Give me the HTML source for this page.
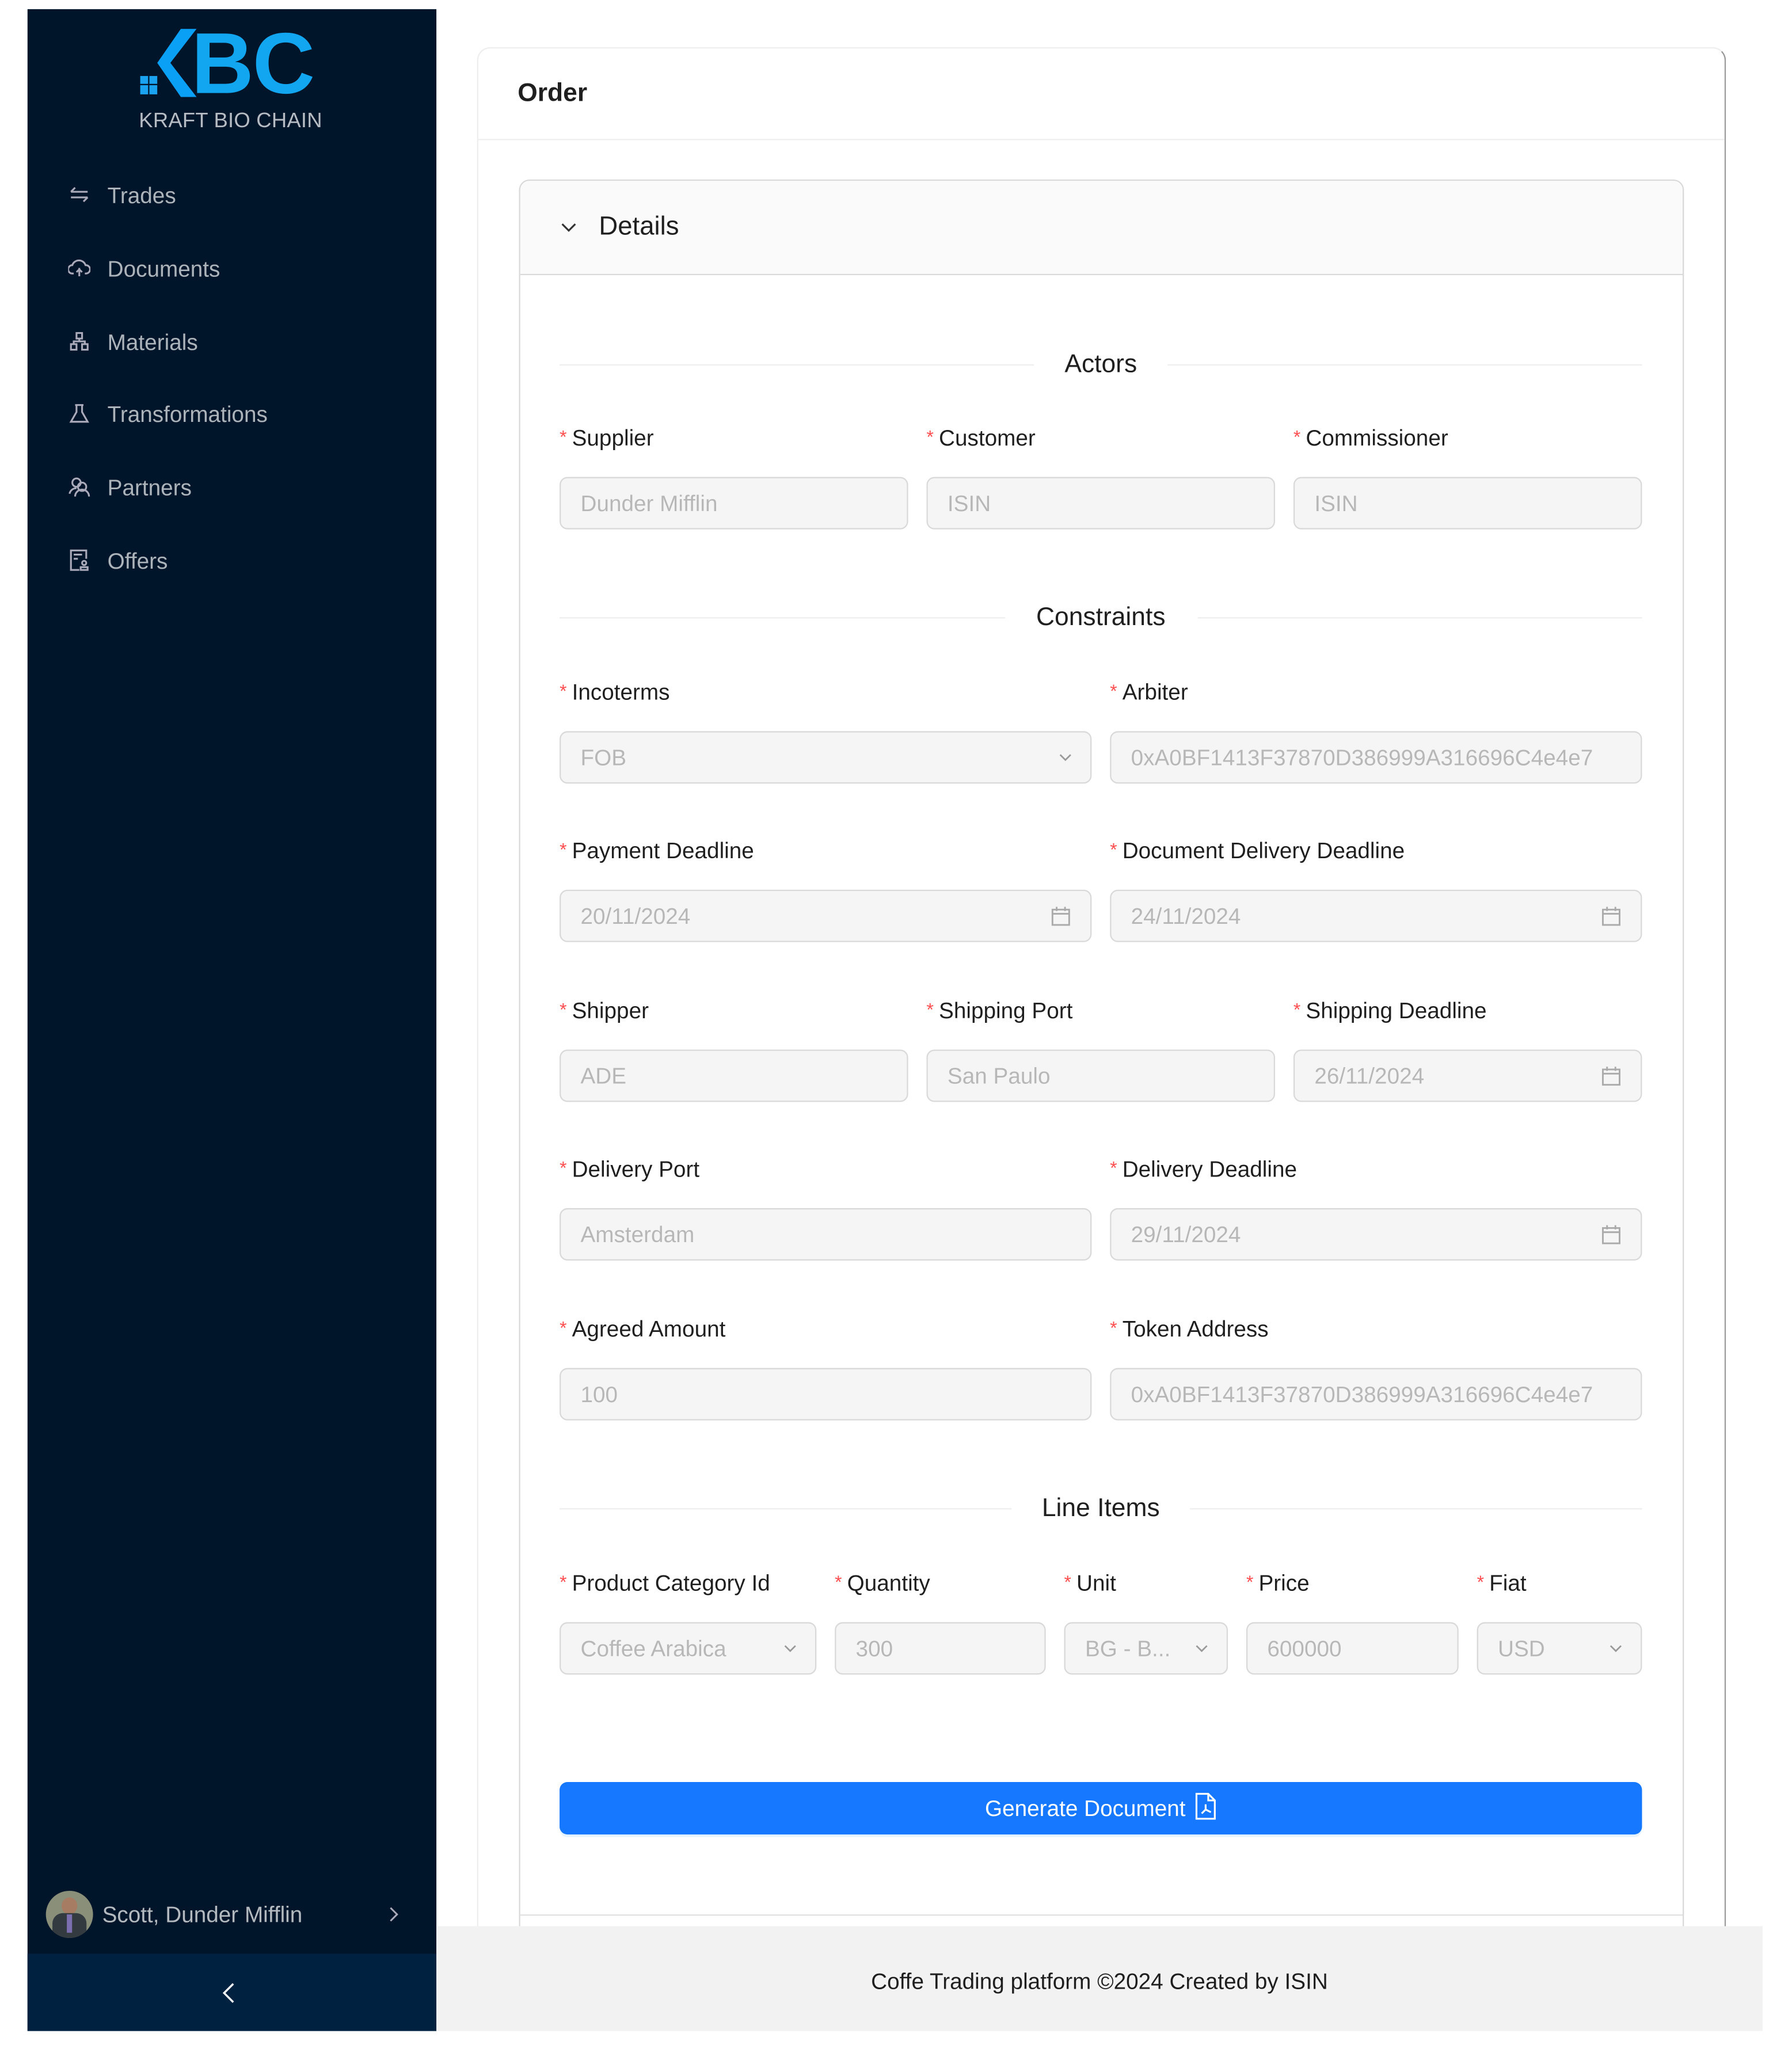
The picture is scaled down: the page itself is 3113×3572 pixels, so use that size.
<!DOCTYPE html>
<html><head><meta charset="utf-8"><style>
*{box-sizing:border-box;margin:0;padding:0}
html,body{width:3113px;height:3571px;overflow:hidden;background:#fff}
#root{position:absolute;left:0;top:0;width:1368px;height:1569px;transform:scale(2.2765);transform-origin:0 0;font-family:"Liberation Sans",sans-serif;color:rgba(0,0,0,.88)}
.a{position:absolute}
.side{left:21px;top:7px;width:312px;height:1543px;background:#001529}
.trig{left:21px;top:1491px;width:312px;height:59px;background:#002140}
.mi{position:absolute;left:82px;font-size:17px;color:rgba(255,255,255,.68)}
.ic{position:absolute;left:52px;width:17px;height:17px}
.card{left:364px;top:36px;width:953px;height:1500px;border:1px solid #eee;border-right:1px solid #999;border-radius:10px;background:#fff}
.lbl{position:absolute;font-size:17px;color:rgba(0,0,0,.88)}
.lbl:before{content:"*";color:#ff4d4f;font-size:14px;margin-right:4px;position:relative;top:-2px}
.in{position:absolute;height:40px;background:#f5f5f5;border:1px solid #d9d9d9;border-radius:6px;font-size:17px;color:rgba(0,0,0,.25);padding-left:15px;line-height:39px;white-space:nowrap;overflow:hidden}
.chev{position:absolute;right:14px;top:14px;width:10px;height:10px}
.cal{position:absolute;right:14px;top:11px;width:17px;height:17px}
.div{position:absolute;height:1px;background:#eee}
.dt{position:absolute;font-size:19.5px;color:rgba(0,0,0,.88);text-align:center;width:200px}
</style></head><body><div id="root">
<div class="a side"></div>
<div class="a trig"></div>
<div class="a" style="left:107px;top:58px;width:6px;height:6px;background:#1aa3f0"></div>
<div class="a" style="left:114px;top:58px;width:6px;height:6px;background:#1aa3f0"></div>
<div class="a" style="left:107px;top:65px;width:6px;height:7px;background:#1aa3f0"></div>
<div class="a" style="left:114px;top:65px;width:6px;height:7px;background:#1aa3f0"></div>
<svg class="a" style="left:118px;top:22px" width="32" height="52" viewBox="0 0 32 52"><path d="M20 0H32L12 26 32 52H20L2 26Z" fill="#0aa0f5"/></svg>
<div class="a" style="left:146px;top:8px;font-size:66px;font-weight:bold;color:#13a6f0;letter-spacing:-1px;line-height:80px">BC</div>
<div class="a" style="left:106px;top:84px;font-size:16px;color:#b7bcc4;letter-spacing:.1px">KRAFT BIO CHAIN</div>
<svg class="ic" style="top:140px" viewBox="0 0 16 16" fill="none" stroke="#aab" stroke-width="1.3"><path d="M2 6h12M2 6l3-3M14 10H2M14 10l-3 3"/></svg>
<div class="mi" style="top:140px">Trades</div>
<svg class="ic" style="top:196px" viewBox="0 0 16 16" fill="none" stroke="#aab" stroke-width="1.3"><path d="M4 12H3a3 3 0 010-6 5 5 0 019.5 0A3 3 0 0113 12h-1M8 8v6M6 11l2-2 2 2"/></svg>
<div class="mi" style="top:196px">Documents</div>
<svg class="ic" style="top:252px" viewBox="0 0 16 16" fill="none" stroke="#aab" stroke-width="1.3"><rect x="6" y="2" width="4" height="4"/><rect x="2" y="10" width="4" height="4"/><rect x="10" y="10" width="4" height="4"/><path d="M8 6v2M4 10V8h8v2"/></svg>
<div class="mi" style="top:252px">Materials</div>
<svg class="ic" style="top:307px" viewBox="0 0 16 16" fill="none" stroke="#aab" stroke-width="1.3"><path d="M5 2h6M6 2v5L2 14h12L10 7V2"/></svg>
<div class="mi" style="top:307px">Transformations</div>
<svg class="ic" style="top:363px" viewBox="0 0 16 16" fill="none" stroke="#aab" stroke-width="1.3"><circle cx="6" cy="5" r="3"/><circle cx="10" cy="8" r="3"/><path d="M1 13a5 5 0 015-4M5 15a5 5 0 0110 0"/></svg>
<div class="mi" style="top:363px">Partners</div>
<svg class="ic" style="top:419px" viewBox="0 0 16 16" fill="none" stroke="#aab" stroke-width="1.3"><path d="M13 7V1H2v14h6"/><path d="M4 4h6M4 7h3"/><circle cx="11.5" cy="10" r="1.5"/><path d="M9 15v-2h5v2z"/></svg>
<div class="mi" style="top:419px">Offers</div>
<div class="a" style="left:35px;top:1443px;width:36px;height:36px;border-radius:50%;overflow:hidden;background:#8a8f7a">
  <div class="a" style="left:12px;top:5px;width:12px;height:13px;border-radius:50%;background:#a67d63"></div>
  <div class="a" style="left:5px;top:17px;width:26px;height:22px;border-radius:8px 8px 0 0;background:#333a40"></div>
  <div class="a" style="left:16px;top:18px;width:4px;height:14px;background:#7c6fb0"></div>
</div>
<div class="a" style="left:78px;top:1452px;font-size:17px;color:rgba(255,255,255,.7)">Scott, Dunder Mifflin</div>
<svg class="a" style="left:296px;top:1455px" width="8" height="12" viewBox="0 0 8 12" fill="none" stroke="#aab" stroke-width="1.3"><path d="M2 1l5 5-5 5"/></svg>
<svg class="a" style="left:169px;top:1513px" width="10" height="16" viewBox="0 0 10 16" fill="none" stroke="#fff" stroke-width="1.5"><path d="M9 1L2 8l7 7"/></svg>
<div class="a card"></div>
<div class="a" style="left:395px;top:60px;font-size:19.5px;font-weight:bold">Order</div>
<div class="div" style="left:365px;top:106px;width:951px"></div>
<div class="a" style="left:396px;top:137px;width:889px;height:1400px;border:1px solid #d9d9d9;border-radius:8px"></div>
<div class="a" style="left:397px;top:138px;width:887px;height:72px;background:#fafafa;border-bottom:1px solid #d9d9d9;border-radius:8px 8px 0 0"></div>
<svg class="a" style="left:428px;top:169px" width="12" height="10" viewBox="0 0 12 10" fill="none" stroke="#333" stroke-width="1.4"><path d="M1 2l5 5 5-5"/></svg>
<div class="a" style="left:457px;top:162px;font-size:20px">Details</div>
<div class="div" style="left:427px;top:278px;width:362px"></div><div class="div" style="left:891px;top:278px;width:362px"></div>
<div class="dt" style="left:740px;top:267px">Actors</div>
<div class="div" style="left:427px;top:471px;width:340px"></div><div class="div" style="left:914px;top:471px;width:339px"></div>
<div class="dt" style="left:740px;top:460px">Constraints</div>
<div class="div" style="left:427px;top:1151px;width:345px"></div><div class="div" style="left:908px;top:1151px;width:345px"></div>
<div class="dt" style="left:740px;top:1140px">Line Items</div>
<div class="lbl" style="left:427px;top:325px">Supplier</div>
<div class="lbl" style="left:707px;top:325px">Customer</div>
<div class="lbl" style="left:987px;top:325px">Commissioner</div>
<div class="in" style="left:427px;top:364px;width:266px">Dunder Mifflin</div>
<div class="in" style="left:707px;top:364px;width:266px">ISIN</div>
<div class="in" style="left:987px;top:364px;width:266px">ISIN</div>
<div class="lbl" style="left:427px;top:519px">Incoterms</div>
<div class="lbl" style="left:847px;top:519px">Arbiter</div>
<div class="in" style="left:427px;top:558px;width:406px">FOB<svg class="chev" viewBox="0 0 10 10" fill="none" stroke="#999" stroke-width="1.2"><path d="M1 3l4 4 4-4"/></svg></div>
<div class="in" style="left:847px;top:558px;width:406px">0xA0BF1413F37870D386999A316696C4e4e7</div>
<div class="lbl" style="left:427px;top:640px">Payment Deadline</div>
<div class="lbl" style="left:847px;top:640px">Document Delivery Deadline</div>
<div class="in" style="left:427px;top:679px;width:406px">20/11/2024<svg class="cal" viewBox="0 0 16 16" fill="none" stroke="#aaa" stroke-width="1.2"><rect x="2" y="3" width="12" height="11"/><path d="M2 6h12M5 1v3M11 1v3"/></svg></div>
<div class="in" style="left:847px;top:679px;width:406px">24/11/2024<svg class="cal" viewBox="0 0 16 16" fill="none" stroke="#aaa" stroke-width="1.2"><rect x="2" y="3" width="12" height="11"/><path d="M2 6h12M5 1v3M11 1v3"/></svg></div>
<div class="lbl" style="left:427px;top:762px">Shipper</div>
<div class="lbl" style="left:707px;top:762px">Shipping Port</div>
<div class="lbl" style="left:987px;top:762px">Shipping Deadline</div>
<div class="in" style="left:427px;top:801px;width:266px">ADE</div>
<div class="in" style="left:707px;top:801px;width:266px">San Paulo</div>
<div class="in" style="left:987px;top:801px;width:266px">26/11/2024<svg class="cal" viewBox="0 0 16 16" fill="none" stroke="#aaa" stroke-width="1.2"><rect x="2" y="3" width="12" height="11"/><path d="M2 6h12M5 1v3M11 1v3"/></svg></div>
<div class="lbl" style="left:427px;top:883px">Delivery Port</div>
<div class="lbl" style="left:847px;top:883px">Delivery Deadline</div>
<div class="in" style="left:427px;top:922px;width:406px">Amsterdam</div>
<div class="in" style="left:847px;top:922px;width:406px">29/11/2024<svg class="cal" viewBox="0 0 16 16" fill="none" stroke="#aaa" stroke-width="1.2"><rect x="2" y="3" width="12" height="11"/><path d="M2 6h12M5 1v3M11 1v3"/></svg></div>
<div class="lbl" style="left:427px;top:1005px">Agreed Amount</div>
<div class="lbl" style="left:847px;top:1005px">Token Address</div>
<div class="in" style="left:427px;top:1044px;width:406px">100</div>
<div class="in" style="left:847px;top:1044px;width:406px">0xA0BF1413F37870D386999A316696C4e4e7</div>
<div class="lbl" style="left:427px;top:1199px">Product Category Id</div>
<div class="lbl" style="left:637px;top:1199px">Quantity</div>
<div class="lbl" style="left:812px;top:1199px">Unit</div>
<div class="lbl" style="left:951px;top:1199px">Price</div>
<div class="lbl" style="left:1127px;top:1199px">Fiat</div>
<div class="in" style="left:427px;top:1238px;width:196px">Coffee Arabica<svg class="chev" viewBox="0 0 10 10" fill="none" stroke="#999" stroke-width="1.2"><path d="M1 3l4 4 4-4"/></svg></div>
<div class="in" style="left:637px;top:1238px;width:161px">300</div>
<div class="in" style="left:812px;top:1238px;width:125px">BG - B...<svg class="chev" viewBox="0 0 10 10" fill="none" stroke="#999" stroke-width="1.2"><path d="M1 3l4 4 4-4"/></svg></div>
<div class="in" style="left:951px;top:1238px;width:162px">600000</div>
<div class="in" style="left:1127px;top:1238px;width:126px">USD<svg class="chev" viewBox="0 0 10 10" fill="none" stroke="#999" stroke-width="1.2"><path d="M1 3l4 4 4-4"/></svg></div>
<div class="a" style="left:427px;top:1360px;width:826px;height:40px;background:#1677ff;border-radius:6px;box-shadow:0 2px 0 rgba(5,145,255,.1);color:#fff;font-size:17px;text-align:center;line-height:41px">Generate Document <svg style="vertical-align:-3px;margin-left:3px" width="16" height="21" viewBox="0 0 16 21" fill="none" stroke="#fff" stroke-width="1.4"><path d="M1 1h9l5 5v14H1z M10 1v5h5"/><path d="M8 9v4l-3 3M8 13l4 2"/></svg></div>
<div class="div" style="left:397px;top:1461px;width:887px;background:#e0e0e0"></div>
<div class="a" style="left:333px;top:1470px;width:1012px;height:80px;background:#f2f2f2"></div>
<div class="a" style="left:333px;top:1503px;width:1012px;text-align:center;font-size:17px">Coffe Trading platform ©2024 Created by ISIN</div>
</div></body></html>
